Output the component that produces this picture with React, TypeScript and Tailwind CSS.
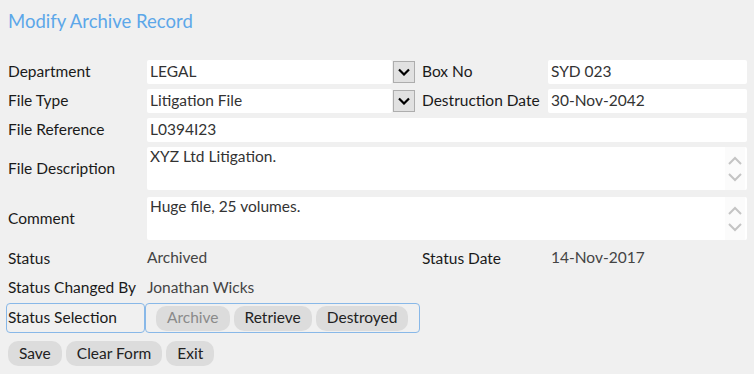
import React from "react";

const Chevron = ({ up = false }: { up?: boolean }) => (
  <svg width="14" height="9" viewBox="0 0 14 9" className="block">
    <path
      d={up ? "M1 8 L7 2 L13 8" : "M1 1 L7 7 L13 1"}
      fill="none"
      stroke="#c4c4c4"
      strokeWidth="2"
    />
  </svg>
);

const DropBtn = () => (
  <div className="w-[22px] h-[22px] ml-px border border-[#adadad] bg-[#e1e1e1] flex items-center justify-center">
    <svg width="12" height="8" viewBox="0 0 12 8">
      <path d="M1 1.5 L6 6.5 L11 1.5" fill="none" stroke="#000" strokeWidth="2.2" />
    </svg>
  </div>
);

const Field = ({ value, className = "" }: { value: string; className?: string }) => (
  <div className={`h-[24px] bg-white rounded-[2px] pl-[3px] flex items-center text-[#333] ${className}`}>
    {value}
  </div>
);

const TextArea = ({ value }: { value: string }) => (
  <div className="flex-1 h-[43px] bg-white rounded-[2px] flex">
    <div className="flex-1 pl-[3px] leading-[18px] text-[#333]">{value}</div>
    <div className="w-[20px] bg-[#fbfbfb] flex flex-col items-center justify-center gap-[8px] mr-[2px]">
      <Chevron up />
      <Chevron />
    </div>
  </div>
);

const Pill = ({ label, disabled = false }: { label: string; disabled?: boolean }) => (
  <div
    className={`h-[25px] px-[11px] rounded-[10px] bg-[#dcdcdc] flex items-center ${
      disabled ? "text-[#8a8a8a]" : "text-[#222]"
    }`}
  >
    {label}
  </div>
);

export default function App() {
  return (
    <div
      className="w-[754px] h-[374px] bg-[#f0f0f0] text-[#1a1a1a] text-[15.5px] overflow-hidden"
      style={{ fontFamily: "Lato, 'Open Sans', sans-serif" }}
    >
      <div className="pl-[8px] pt-[10px] text-[18.5px] text-[#5ca7e9] leading-[22px]">
        Modify Archive Record
      </div>

      <div className="pl-[8px] pr-[7px] mt-[28px] flex flex-col">
        <div className="flex items-center h-[24px]">
          <div className="w-[139px]">Department</div>
          <Field value="LEGAL" className="w-[245px]" />
          <DropBtn />
          <div className="w-[133px] pl-[7px]">Box No</div>
          <Field value="SYD 023" className="flex-1" />
        </div>
        <div className="flex items-center h-[24px] mt-[5px]">
          <div className="w-[139px]">File Type</div>
          <Field value="Litigation File" className="w-[245px]" />
          <DropBtn />
          <div className="w-[133px] pl-[7px]">Destruction Date</div>
          <Field value="30-Nov-2042" className="flex-1" />
        </div>
        <div className="flex items-center h-[24px] mt-[5px]">
          <div className="w-[139px]">File Reference</div>
          <Field value="L0394I23" className="flex-1" />
        </div>
        <div className="flex items-center mt-[5px]">
          <div className="w-[139px]">File Description</div>
          <TextArea value="XYZ Ltd Litigation." />
        </div>
        <div className="flex items-center mt-[7px]">
          <div className="w-[139px]">Comment</div>
          <TextArea value="Huge file, 25 volumes." />
        </div>
        <div className="flex items-center h-[20px] mt-[9px]">
          <div className="w-[139px]">Status</div>
          <div className="w-[275px] text-[#444] -mt-[2px]">Archived</div>
          <div className="w-[129px]">Status Date</div>
          <div className="text-[#444] -mt-[2px]">14-Nov-2017</div>
        </div>
        <div className="flex items-center h-[20px] mt-[9px]">
          <div className="w-[139px]">Status Changed By</div>
          <div className="text-[#444]">Jonathan Wicks</div>
        </div>
        <div className="flex h-[30px] mt-[5px] -ml-[2px] w-[414px]">
          <div className="w-[139px] border border-[#88b8e8] rounded-[4px] flex items-center pl-[1px]">
            Status Selection
          </div>
          <div className="flex-1 border border-[#88b8e8] rounded-[4px] flex items-center gap-[4px] pl-[10px]">
            <Pill label="Archive" disabled />
            <Pill label="Retrieve" />
            <Pill label="Destroyed" />
          </div>
        </div>
        <div className="flex items-center gap-[4px] mt-[8px]">
          <Pill label="Save" />
          <Pill label="Clear Form" />
          <Pill label="Exit" />
        </div>
      </div>
    </div>
  );
}
